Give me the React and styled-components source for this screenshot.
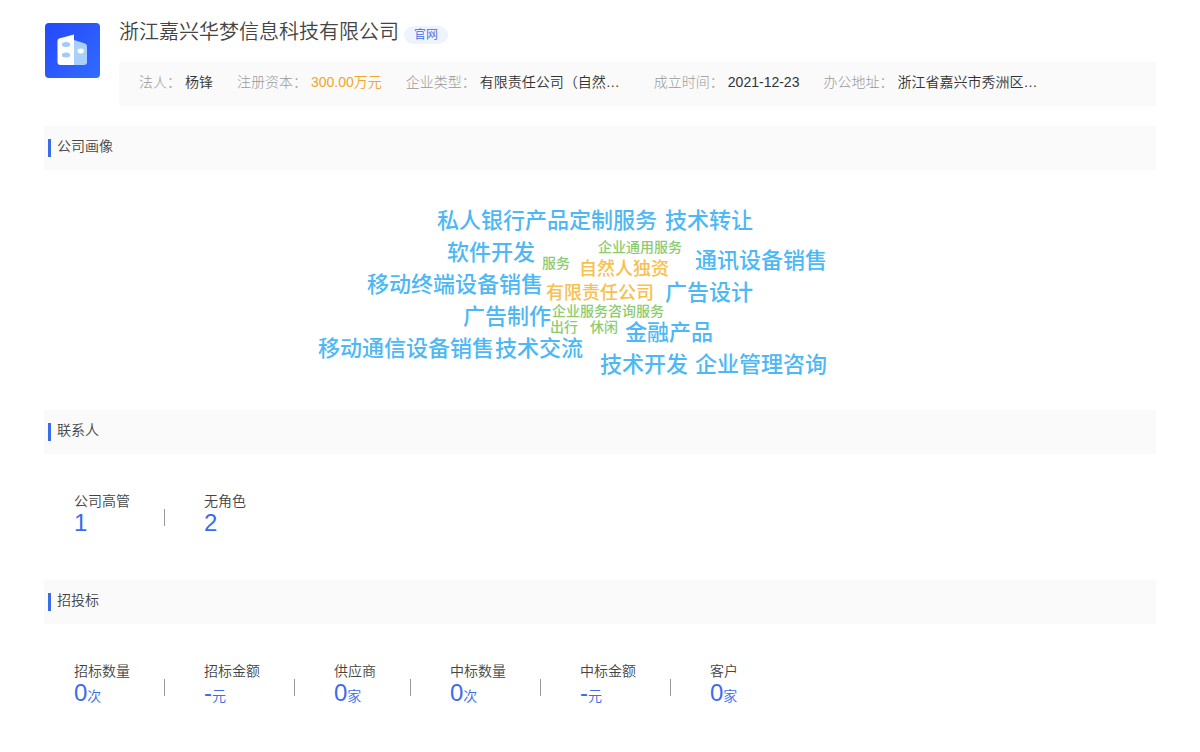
import styled, { createGlobalStyle } from 'styled-components';
const GlobalStyle = createGlobalStyle`
   * {
      box-sizing: border-box;
   }
   body {
      background-color: #ffffff;
      color: #444444;
      font-family: 'Liberation Sans', 'Noto Sans CJK SC', sans-serif;
      font-size: 14px;
      font-weight: 350;
      line-height: 20px;
      margin: 0;
   }
   h1, h2, dl, dt, dd {
      font-size: inherit;
      font-weight: inherit;
      margin: 0;
   }
`;
const Page = styled.main`
   padding: 16px 44px;
`;
const Header = styled.header`
   align-items: flex-start;
   display: flex;
   gap: 19px;
   margin-bottom: 20px;
`;
const Logo = styled.svg`
   flex: none;
   height: 56px;
   margin-top: 6px;
   width: 56px;
`;
const Summary = styled.div`
   flex: 1;
   min-width: 0;
`;
const TitleRow = styled.div`
   align-items: center;
   display: flex;
   gap: 5px;
   height: 32px;
   margin-bottom: 14px;
`;
const Title = styled.h1`
   && {
      font-size: 20px;
   }
   line-height: 32px;
`;
const SiteLink = styled.a`
   background-color: #eef4fe;
   border-radius: 9px;
   color: #3a6cea;
   font-size: 12px;
   line-height: 18px;
   margin-top: 6px;
   padding: 0 10px;
   text-decoration: none;
`;
const InfoBar = styled.dl`
   background-color: #fafafa;
   display: flex;
   flex-wrap: wrap;
   column-gap: 24px;
   min-height: 44px;
   padding: 10px 20px 14px;
`;
const InfoItem = styled.div`
   display: flex;
   flex: none;
   gap: 4px;
`;
const InfoLabel = styled.dt`
   && {
      color: #999999;
      font-weight: 300;
   }
`;
const InfoValue = styled.dd`
   color: ${props => (props.$highlight ? '#f0a62e' : '#333333')};
   min-width: ${props => (props.$wide ? '150px' : '0')};
   white-space: nowrap;
`;
const SectionHeader = styled.div`
   align-items: center;
   background-color: #fafafa;
   display: flex;
   gap: 6px;
   height: 44px;
   padding: 0 4px;
   &:before {
      background-color: #3a6cea;
      content: '';
      height: 18px;
      width: 3px;
   }
`;
const SectionTitle = styled.h2`
   padding-bottom: 4px;
`;
const CloudArea = styled.div`
   display: flex;
   height: 240px;
   justify-content: center;
   overflow: hidden;
`;
const Cloud = styled.div`
   flex: none;
   position: relative;
   width: 600px;
`;
const tones = {
   large: { color: '#4db8f5', size: 22 },
   medium: { color: '#f8c04e', size: 18 },
   small: { color: '#8dcb70', size: 14 },
};
const Word = styled.span`
   color: ${props => tones[props.$tone].color};
   font-size: ${props => tones[props.$tone].size}px;
   font-weight: 500;
   line-height: 32px;
   position: absolute;
   white-space: nowrap;
`;
const Stats = styled.dl`
   display: flex;
   padding: 37px 30px 45px;
`;
const Stat = styled.div`
   display: flex;
   flex: none;
   & + & {
      margin-left: 34px;
   }
   & + &:before {
      background-color: #999999;
      content: '';
      height: 17px;
      margin: 18px 39px 0 0;
      width: 1px;
   }
`;
const StatNumber = styled.dd`
   color: #3a6cea;
   font-size: 24px;
   line-height: 24px;
   & small {
      font-size: 14px;
   }
`;
const info = [
   { label: '法人', value: '杨锋' },
   { label: '注册资本', value: '300.00万元', highlight: true },
   { label: '企业类型', value: '有限责任公司（自然…', wide: true },
   { label: '成立时间', value: '2021-12-23' },
   { label: '办公地址', value: '浙江省嘉兴市秀洲区…', wide: true },
];
const words = [
   { text: '私人银行产品定制服务', tone: 'large', x: 137, y: 35 },
   { text: '技术转让', tone: 'large', x: 365, y: 35 },
   { text: '软件开发', tone: 'large', x: 147, y: 67 },
   { text: '企业通用服务', tone: 'small', x: 298, y: 61 },
   { text: '通讯设备销售', tone: 'large', x: 395, y: 75 },
   { text: '服务', tone: 'small', x: 242, y: 77 },
   { text: '自然人独资', tone: 'medium', x: 279, y: 83 },
   { text: '移动终端设备销售', tone: 'large', x: 67, y: 99 },
   { text: '有限责任公司', tone: 'medium', x: 246, y: 107 },
   { text: '广告设计', tone: 'large', x: 365, y: 107 },
   { text: '广告制作', tone: 'large', x: 163, y: 131 },
   { text: '企业服务咨询服务', tone: 'small', x: 252, y: 125 },
   { text: '出行', tone: 'small', x: 250, y: 141 },
   { text: '休闲', tone: 'small', x: 290, y: 141 },
   { text: '金融产品', tone: 'large', x: 325, y: 147 },
   { text: '移动通信设备销售', tone: 'large', x: 18, y: 163 },
   { text: '技术交流', tone: 'large', x: 195, y: 163 },
   { text: '技术开发', tone: 'large', x: 300, y: 179 },
   { text: '企业管理咨询', tone: 'large', x: 395, y: 179 },
];
const contacts = [
   { label: '公司高管', value: '1' },
   { label: '无角色', value: '2' },
];
const bids = [
   { label: '招标数量', value: '0', unit: '次' },
   { label: '招标金额', value: '-', unit: '元' },
   { label: '供应商', value: '0', unit: '家' },
   { label: '中标数量', value: '0', unit: '次' },
   { label: '中标金额', value: '-', unit: '元' },
   { label: '客户', value: '0', unit: '家' },
];
const CompanyLogo = () => (
   <Logo viewBox='0 0 56 56' aria-hidden='true'>
      <defs>
         <linearGradient id='logo' x1='0' y1='0' x2='1' y2='1'>
            <stop offset='0' stopColor='#2448fa' />
            <stop offset='1' stopColor='#336bff' />
         </linearGradient>
      </defs>
      <rect x='1' y='1' width='55' height='55' rx='4' fill='url(#logo)' />
      <path d='M30 18l11 3.500q2 .7 2 2.800V40q0 3-3 3H30z' fill='#a9d0fb' />
      <path d='M15 16.500L30 12.500V43H16.500q-3 0-3-3V19q0-2 1.500-2.500z' fill='#ffffff' />
      <ellipse cx='22' cy='22.500' rx='4.200' ry='2.500' fill='#a3c8fa' />
      <ellipse cx='22' cy='33' rx='4.200' ry='2.500' fill='#a3c8fa' />
      <ellipse cx='36.700' cy='29' rx='3.200' ry='2.400' fill='#ffffff' />
   </Logo>
);
const StatList = ({ items }) => (
   <Stats>
      {items.map(({ label, value, unit }) => (
         <Stat key={label}>
            <div>
               <dt>{label}</dt>
               <StatNumber>
                  {value}
                  {unit && <small>{unit}</small>}
               </StatNumber>
            </div>
         </Stat>
      ))}
   </Stats>
);
const Section = ({ title, children }) => (
   <section>
      <SectionHeader>
         <SectionTitle>{title}</SectionTitle>
      </SectionHeader>
      {children}
   </section>
);
const App = () => (
   <Page>
      <GlobalStyle />
      <Header>
         <CompanyLogo />
         <Summary>
            <TitleRow>
               <Title>浙江嘉兴华梦信息科技有限公司</Title>
               <SiteLink href='#'>官网</SiteLink>
            </TitleRow>
            <InfoBar>
               {info.map(({ label, value, highlight, wide }) => (
                  <InfoItem key={label}>
                     <InfoLabel>{label}：</InfoLabel>
                     <InfoValue $highlight={highlight} $wide={wide}>
                        {value}
                     </InfoValue>
                  </InfoItem>
               ))}
            </InfoBar>
         </Summary>
      </Header>
      <Section title='公司画像'>
         <CloudArea>
            <Cloud>
               {words.map(({ text, tone, x, y }) => (
                  <Word key={text} $tone={tone} style={{ left: x, top: y }}>
                     {text}
                  </Word>
               ))}
            </Cloud>
         </CloudArea>
      </Section>
      <Section title='联系人'>
         <StatList items={contacts} />
      </Section>
      <Section title='招投标'>
         <StatList items={bids} />
      </Section>
   </Page>
);
export default App;
